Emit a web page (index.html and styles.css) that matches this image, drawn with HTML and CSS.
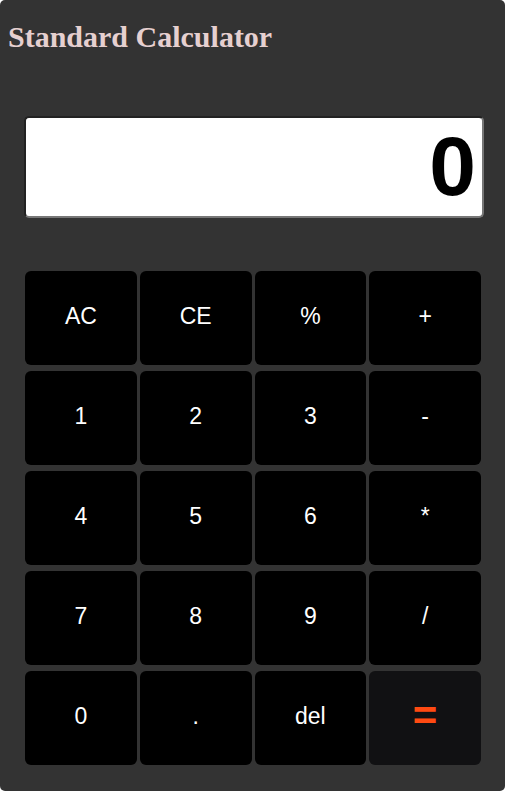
FILE: index.html
```html
<!DOCTYPE html>
<html>
<head>
<meta charset="utf-8">
<link rel="stylesheet" href="styles.css">
</head>
<body>
<div class="calc">
  <h2 class="title">Standard Calculator</h2>
  <div class="display"><span class="value">0</span></div>
  <div class="keys">
    <button class="key">AC</button>
    <button class="key">CE</button>
    <button class="key">%</button>
    <button class="key">+</button>
    <button class="key">1</button>
    <button class="key">2</button>
    <button class="key">3</button>
    <button class="key">-</button>
    <button class="key">4</button>
    <button class="key">5</button>
    <button class="key">6</button>
    <button class="key">*</button>
    <button class="key">7</button>
    <button class="key">8</button>
    <button class="key">9</button>
    <button class="key">/</button>
    <button class="key">0</button>
    <button class="key">.</button>
    <button class="key">del</button>
    <button class="key key-eq">=</button>
  </div>
</div>
</body>
</html>
```
FILE: styles.css
```css
html, body {
  margin: 0;
  padding: 0;
  background: #ffffff;
}
.calc {
  background: #333333;
  border-radius: 5px;
  height: 791px;
  box-sizing: border-box;
  padding-top: 20px;
  overflow: hidden;
}
.title {
  margin: 0;
  padding-left: 8px;
  font-family: "Liberation Serif", "Times New Roman", serif;
  font-weight: bold;
  font-size: 30px;
  line-height: 34px;
  color: #e6d0d0;
}
.display {
  margin: 62px 21px 0 24px;
  height: 102px;
  box-sizing: border-box;
  background: #ffffff;
  border: 2px solid;
  border-color: #222222 #777777 #777777 #222222;
  border-radius: 5px;
  display: flex;
  align-items: center;
  justify-content: flex-end;
  padding-right: 6px;
  padding-bottom: 3px;
}
.value {
  font-family: "Liberation Sans", Arial, sans-serif;
  font-weight: bold;
  font-size: 84px;
  line-height: 1;
  color: #000000;
}
.keys {
  margin: 53px 24px 0 25px;
  display: grid;
  grid-template-columns: repeat(4, 1fr);
  grid-auto-rows: 94px;
  column-gap: 3px;
  row-gap: 6px;
}
.key {
  background: #000000;
  color: #ffffff;
  border: none;
  border-radius: 6px;
  font-family: "Liberation Sans", Arial, sans-serif;
  font-size: 23px;
  padding: 0 0 4px 0;
  margin: 0;
}
.key-eq {
  background: #111113;
  color: #ff4a12;
  font-weight: bold;
  font-size: 42px;
}
```
